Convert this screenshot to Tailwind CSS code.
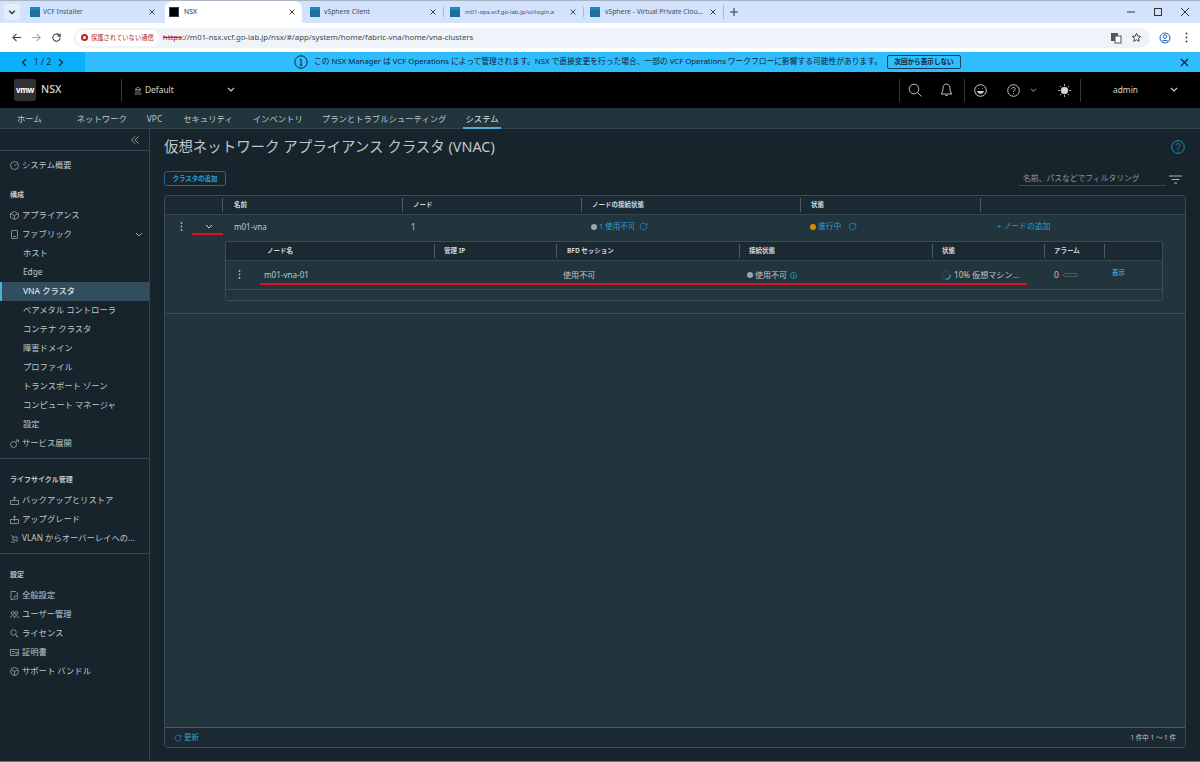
<!DOCTYPE html>
<html lang="ja">
<head>
<meta charset="UTF-8">
<title>NSX</title>
<script src="https://cdn.jsdelivr.net/npm/@tailwindcss/browser@4"></script>
</head>
<body class="w-[1200px] h-[762px] overflow-hidden flex flex-col bg-[#17242b] text-[8.3px] text-[#bfc8cc] font-['Noto_Sans','Noto_Sans_CJK_JP',sans-serif]">

<!-- browser tabs -->
<div class="h-[23px] shrink-0 flex items-center bg-[#d3e3fd] border-t border-[#a9b4c4] text-[6.8px] text-[#474c52]">
  <div class="w-[16px] h-[16px] ml-[4px] mr-[6px] rounded bg-[#e6eefc] flex items-center justify-center">
    <svg class="w-[8px] h-[8px]" viewBox="0 0 10 10" fill="none" stroke="#1f2937" stroke-width="1.6"><path d="M1.5 3.5 5 7l3.5-3.500"/></svg>
  </div>
  <div class="w-[139px] flex items-center pl-[4px] pr-[10px] gap-[3px]">
    <span class="w-[10px] h-[10px] shrink-0 bg-[#1d6f9e] border-t-[3px] border-[#0f8fc9]"></span>
    <span class="flex-1 min-w-0 truncate">VCF Installer</span>
    <svg class="w-[6px] h-[6px] shrink-0" viewBox="0 0 6 6" fill="none" stroke="#444"><path d="m.5.5 5 5M5.500.5l-5 5"/></svg>
  </div>
  <div class="w-[137px] h-[22px] flex items-center pl-[4px] pr-[7px] gap-[5px] bg-white rounded-t-lg text-[#1f1f1f]">
    <span class="w-[10px] h-[10px] shrink-0 bg-black border border-[#39424a]"></span>
    <span class="flex-1 min-w-0 truncate">NSX</span>
    <svg class="w-[6px] h-[6px] shrink-0" viewBox="0 0 6 6" fill="none" stroke="#444"><path d="m.5.5 5 5M5.500.5l-5 5"/></svg>
  </div>
  <div class="w-[141px] flex items-center pl-[8px] pr-[7px] gap-[4px]">
    <span class="w-[10px] h-[10px] shrink-0 bg-[#1d6f9e] border-t-[3px] border-[#0f8fc9]"></span>
    <span class="flex-1 min-w-0 truncate">vSphere Client</span>
    <svg class="w-[6px] h-[6px] shrink-0" viewBox="0 0 6 6" fill="none" stroke="#444"><path d="m.5.5 5 5M5.500.5l-5 5"/></svg>
  </div>
  <div class="w-[140px] flex items-center pl-[6px] pr-[7px] gap-[5px] border-l border-[#a9b9d3]">
    <span class="w-[10px] h-[10px] shrink-0 bg-[#1d6f9e] border-t-[3px] border-[#0f8fc9]"></span>
    <span class="flex-1 min-w-0 text-[6px] whitespace-nowrap">m01-ops.vcf.go-lab.jp/ui/login.a</span>
    <svg class="w-[6px] h-[6px] shrink-0" viewBox="0 0 6 6" fill="none" stroke="#444"><path d="m.5.5 5 5M5.500.5l-5 5"/></svg>
  </div>
  <div class="w-[140px] flex items-center pl-[6px] pr-[7px] gap-[5px] border-l border-[#a9b9d3]">
    <span class="w-[10px] h-[10px] shrink-0 bg-[#1d6f9e] border-t-[3px] border-[#0f8fc9]"></span>
    <span class="flex-1 min-w-0 truncate">vSphere - Virtual Private Clouds</span>
    <svg class="w-[6px] h-[6px] shrink-0" viewBox="0 0 6 6" fill="none" stroke="#444"><path d="m.5.5 5 5M5.500.5l-5 5"/></svg>
  </div>
  <div class="pl-[6px] border-l border-[#a9b9d3]">
    <svg class="w-[8px] h-[14px]" viewBox="0 0 8 14" fill="none" stroke="#333"><path d="M4 3v8M0 7h8"/></svg>
  </div>
  <div class="ml-auto flex items-center gap-[17px] pr-[10px]">
    <svg class="w-[10px] h-[10px]" viewBox="0 0 10 10" stroke="#333" fill="none"><path d="M1 5h8"/></svg>
    <svg class="w-[10px] h-[10px]" viewBox="0 0 10 10" stroke="#333" fill="none"><rect x="1.500" y="1.500" width="7" height="7"/></svg>
    <svg class="w-[10px] h-[10px]" viewBox="0 0 10 10" stroke="#333" fill="none"><path d="M1 1l8 8M9 1 1 9"/></svg>
  </div>
</div>

<!-- address bar -->
<div class="h-[29px] shrink-0 flex items-center bg-white text-[#474747]">
  <div class="w-[73px] flex items-center justify-around px-[6px]">
    <svg class="w-[11px] h-[11px]" viewBox="0 0 12 12" fill="none" stroke="#444" stroke-width="1.2"><path d="M11 6H2M6 2 2 6l4 4"/></svg>
    <svg class="w-[11px] h-[11px]" viewBox="0 0 12 12" fill="none" stroke="#a5a5a5" stroke-width="1.2"><path d="M1 6h9M6 2l4 4-4 4"/></svg>
    <svg class="w-[11px] h-[11px]" viewBox="0 0 12 12" fill="none" stroke="#444" stroke-width="1.2"><path d="M10 6a4 4 0 1 1-1.200-2.800L10 4.400M10 1.500v3H7"/></svg>
  </div>
  <div class="w-[1077px] h-[20px] flex items-center rounded-full bg-[#eff3fa]">
    <div class="h-[16px] ml-[3px] pl-[5px] pr-[5px] flex items-center gap-[3px] rounded-full bg-white text-[#b3261e] text-[6.3px]">
      <span class="w-[7px] h-[7px] rounded-full bg-[#c5221f] flex items-center justify-center"><span class="w-[3px] h-[3px] rounded-full bg-white"></span></span>
      保護されていない通信
    </div>
    <div class="ml-[4px] text-[7.85px]"><span class="text-[#c5221f] line-through">https</span>://m01-nsx.vcf.go-lab.jp/nsx/#/app/system/home/fabric-vna/home/vna-clusters</div>
    <div class="ml-auto mr-[8px] flex items-center gap-[9px]">
      <svg class="w-[12px] h-[12px]" viewBox="0 0 12 12"><rect x="1" y="1" width="7" height="8" fill="#555"/><rect x="5" y="4" width="6" height="7" fill="#fff" stroke="#555"/></svg>
      <svg class="w-[11px] h-[11px]" viewBox="0 0 12 12" fill="none" stroke="#333"><path d="m6 1.500 1.400 3 3.200.3-2.400 2.200.7 3.200L6 8.500l-2.900 1.700.7-3.200L1.400 4.800l3.200-.3z"/></svg>
    </div>
  </div>
  <div class="flex-1 flex items-center justify-between pl-[9px] pr-[12px]">
    <svg class="w-[12px] h-[12px]" viewBox="0 0 12 12" fill="none" stroke="#1a5fc8"><circle cx="6" cy="6" r="5"/><circle cx="6" cy="4.600" r="1.700"/><path d="M2.800 9.500C3.600 8 8.400 8 9.200 9.500"/></svg>
    <svg class="w-[3px] h-[11px]" viewBox="0 0 3 11" fill="#444"><circle cx="1.500" cy="1.500" r="1"/><circle cx="1.500" cy="5.500" r="1"/><circle cx="1.500" cy="9.500" r="1"/></svg>
  </div>
</div>

<!-- info banner -->
<div class="h-[20px] shrink-0 flex items-center bg-[#30bdfd] text-[#10232e]">
  <div class="w-[85px] h-full flex items-center justify-center gap-[6px] bg-[#0bb0fb] text-[8.5px]">
    <svg class="w-[7px] h-[9px]" viewBox="0 0 7 9" fill="none" stroke="#10232e" stroke-width="1.2"><path d="M5 1 1.500 4.500 5 8"/></svg>
    <span>1 / 2</span>
    <svg class="w-[7px] h-[9px]" viewBox="0 0 7 9" fill="none" stroke="#10232e" stroke-width="1.2"><path d="m2 1 3.500 3.500L2 8"/></svg>
  </div>
  <svg class="w-[14px] h-[14px] ml-[209px]" viewBox="0 0 14 14" fill="none" stroke="#10232e"><circle cx="7" cy="7" r="6.200"/><path d="M5.800 4.500 7 4v6M5.500 10.200h3"/></svg>
  <div class="ml-[6px] w-[573px] text-[7.75px] whitespace-nowrap">この NSX Manager は VCF Operations によって管理されます。NSX で直接変更を行った場合、一部の VCF Operations ワークフローに影響する可能性があります。</div>
  <button class="h-[14px] w-[74px] rounded-[2px] border border-[#10425e] text-[6.6px] font-bold">次回から表示しない</button>
  <svg class="w-[9px] h-[9px] ml-[219px]" viewBox="0 0 9 9" fill="none" stroke="#10232e" stroke-width="1.200"><path d="m1 1 7 7M8 1 1 8"/></svg>
</div>

<!-- app header -->
<div class="h-[36px] shrink-0 flex items-center bg-black text-[#d5dadc]">
  <div class="w-[22px] h-[22px] ml-[14px] flex items-center justify-center rounded-[2px] bg-[#313131] text-white text-[8px] font-bold tracking-tighter">vmw</div>
  <span class="ml-[5px] w-[80px] text-[10.5px] font-medium">NSX</span>
  <div class="w-px h-[23px] bg-[#33393c]"></div>
  <svg class="w-[8px] h-[9px] ml-[12px]" viewBox="0 0 8 9" fill="none" stroke="#9aa3a7" stroke-width=".8"><path d="M1 3.500 4 1l3 2.500zM2 4v3M4 4v3M6 4v3M.5 8h7"/></svg>
  <span class="ml-[3px] w-[82px] text-[8.4px]">Default</span>
  <svg class="w-[8px] h-[6px]" viewBox="0 0 8 6" fill="none" stroke="#c9d2d6" stroke-width="1.100"><path d="m1 1 3 3 3-3"/></svg>
  <div class="ml-auto flex items-center h-[23px]">
    <div class="w-px h-full bg-[#33393c]"></div>
    <svg class="w-[14px] h-[14px] ml-[8px]" viewBox="0 0 14 14" fill="none" stroke="#b9c1c5" stroke-width="1"><circle cx="6" cy="6" r="4.800"/><path d="m9.500 9.500 4 4"/></svg>
    <svg class="w-[13px] h-[14px] ml-[18px]" viewBox="0 0 13 14" fill="none" stroke="#b9c1c5" stroke-width="1"><path d="M6.500 1C9 1 10 3 10 5.500c0 3 1 4.500 2 5.500H1c1-1 2-2.500 2-5.500C3 3 4 1 6.500 1ZM5.500 12.500h2"/></svg>
    <div class="w-px h-full bg-[#33393c] ml-[11px]"></div>
    <svg class="w-[13px] h-[13px] ml-[9px]" viewBox="0 0 13 13" fill="none" stroke="#c9d2d6" stroke-width="1"><circle cx="6.500" cy="6.500" r="5.800"/><path d="M3.500 7.500c1 2.500 5 2.500 6 0z" fill="#c9d2d6"/><path d="M4.500 4.500v.5M8.500 4.500v.5"/></svg>
    <svg class="w-[13px] h-[13px] ml-[20px]" viewBox="0 0 13 13" fill="none" stroke="#b9c1c5" stroke-width="1"><circle cx="6.500" cy="6.500" r="5.800"/><path d="M4.800 5c0-2.300 3.500-2.300 3.500 0 0 1.300-1.800 1.300-1.800 3M6.500 9.300v.7"/></svg>
    <svg class="w-[7px] h-[5px] ml-[10px]" viewBox="0 0 8 6" fill="none" stroke="#b9c1c5" stroke-width="1.100"><path d="m1 1 3 3 3-3"/></svg>
    <svg class="w-[13px] h-[13px] ml-[21px]" viewBox="0 0 13 13" fill="#d5dadc" stroke="#d5dadc" stroke-width=".8"><circle cx="6.500" cy="6.500" r="3.300"/><path d="M6.500 0v2M6.500 11v2M0 6.500h2M11 6.500h2M2 2l1.300 1.300M9.700 9.700 11 11M11 2 9.700 3.300M3.300 9.700 2 11"/></svg>
    <div class="w-px h-full bg-[#33393c] ml-[9px]"></div>
    <span class="ml-[32px] w-[57px] text-[8.4px]">admin</span>
    <svg class="w-[8px] h-[6px] mr-[22px]" viewBox="0 0 8 6" fill="none" stroke="#c9d2d6" stroke-width="1.100"><path d="m1 1 3 3 3-3"/></svg>
  </div>
</div>

<!-- nav tabs -->
<div class="h-[21px] shrink-0 flex bg-[#22343c] border-b border-[#33454e] pl-[17px] text-[8.35px] text-[#bfc8cc]">
  <span class="h-[20px] leading-[21px] mr-[35px]">ホーム</span>
  <span class="h-[20px] leading-[21px] mr-[20px]">ネットワーク</span>
  <span class="h-[20px] leading-[21px] mr-[21px]">VPC</span>
  <span class="h-[20px] leading-[21px] mr-[20px]">セキュリティ</span>
  <span class="h-[20px] leading-[21px] mr-[19px]">インベントリ</span>
  <span class="h-[20px] leading-[21px] mr-[17px]">プランとトラブルシューティング</span>
  <span class="h-[21px] leading-[21px] px-[2px] border-b-2 border-[#49afd9] text-[#dfe4e6]">システム</span>
</div>

<div class="flex-1 flex min-h-0">
  <!-- sidebar -->
  <aside class="w-[150px] shrink-0 flex flex-col border-r border-[#33454e]">
    <div class="h-[22px] shrink-0 flex items-center justify-end pr-[10px] border-b border-[#33454e]">
      <svg class="w-[8px] h-[8px]" viewBox="0 0 8 8" fill="none" stroke="#8c989e"><path d="M4 .5.500 4 4 7.500M7.500.500 4 4l3.500 3.500"/></svg>
    </div>
    <div class="h-[19px] mt-[5px] flex items-center gap-[3px] pl-[10px]">
      <svg class="w-[9px] h-[9px]" viewBox="0 0 9 9" fill="none" stroke="#9aa5aa" stroke-width=".8"><circle cx="4.500" cy="4.500" r="4"/><path d="m4.500 5 2-2"/></svg>システム概要</div>
    <div class="h-[19px] mt-[11px] flex items-center pl-[10px] text-[7px] font-bold">構成</div>
    <div class="h-[19px] mt-[1px] flex items-center gap-[3px] pl-[10px]">
      <svg class="w-[9px] h-[9px]" viewBox="0 0 9 9" fill="none" stroke="#9aa5aa" stroke-width=".8"><path d="m4.500.5 4 2v4l-4 2-4-2v-4zM.5 2.500l4 2 4-2M4.500 4.500v4"/></svg>アプライアンス</div>
    <div class="h-[19px] flex items-center gap-[3px] pl-[10px] pr-[6px]">
      <svg class="w-[9px] h-[9px]" viewBox="0 0 9 9" fill="none" stroke="#9aa5aa" stroke-width=".8"><rect x="1.500" y=".5" width="6" height="8" rx=".5"/><path d="M3 6.500h3"/></svg>ファブリック
      <svg class="w-[8px] h-[6px] ml-auto" viewBox="0 0 8 6" fill="none" stroke="#9aa5aa" stroke-width="1"><path d="m1 1 3 3 3-3"/></svg></div>
    <div class="h-[19px] flex items-center pl-[23px]">ホスト</div>
    <div class="h-[19px] flex items-center pl-[23px]">Edge</div>
    <div class="h-[19px] flex items-center pl-[21px] bg-[#324d5e] border-l-2 border-[#49afd9] text-[#dfe4e6] font-medium">VNA クラスタ</div>
    <div class="h-[19px] flex items-center pl-[23px]">ベアメタル コントローラ</div>
    <div class="h-[19px] flex items-center pl-[23px]">コンテナ クラスタ</div>
    <div class="h-[19px] flex items-center pl-[23px]">障害ドメイン</div>
    <div class="h-[19px] flex items-center pl-[23px]">プロファイル</div>
    <div class="h-[19px] flex items-center pl-[23px]">トランスポート ゾーン</div>
    <div class="h-[19px] flex items-center pl-[23px]">コンピュート マネージャ</div>
    <div class="h-[19px] flex items-center pl-[23px]">設定</div>
    <div class="h-[19px] flex items-center gap-[3px] pl-[10px]">
      <svg class="w-[9px] h-[9px]" viewBox="0 0 9 9" fill="none" stroke="#9aa5aa" stroke-width=".8"><circle cx="3.500" cy="5.500" r="3"/><path d="M5.500 3.500 8 1M6 1h2.500v2.500"/></svg>サービス展開</div>
    <div class="h-px mt-[5px] bg-[#33454e]"></div>
    <div class="h-[19px] mt-[12px] flex items-center pl-[10px] text-[7px] font-bold">ライフサイクル管理</div>
    <div class="h-[19px] mt-[1px] flex items-center gap-[3px] pl-[10px]">
      <svg class="w-[9px] h-[9px]" viewBox="0 0 9 9" fill="none" stroke="#9aa5aa" stroke-width=".8"><path d="M.5 4.500h8v4h-8zM4.500 4V1M3 2.300 4.500 1 6 2.300"/></svg>バックアップとリストア</div>
    <div class="h-[19px] flex items-center gap-[3px] pl-[10px]">
      <svg class="w-[9px] h-[9px]" viewBox="0 0 9 9" fill="none" stroke="#9aa5aa" stroke-width=".8"><path d="M.5 4.500h8v4h-8zM4.500 6V1M3 2.300 4.500 1 6 2.300"/></svg>アップグレード</div>
    <div class="h-[19px] flex items-center gap-[3px] pl-[10px]">
      <svg class="w-[9px] h-[9px]" viewBox="0 0 9 9" fill="none" stroke="#9aa5aa" stroke-width=".8"><path d="M1 1l2 2h4v5M3 3v3h3M1 8h4"/></svg>VLAN からオーバーレイへの...</div>
    <div class="h-px mt-[5px] bg-[#33454e]"></div>
    <div class="h-[19px] mt-[12px] flex items-center pl-[10px] text-[7px] font-bold">設定</div>
    <div class="h-[19px] mt-[1px] flex items-center gap-[3px] pl-[10px]">
      <svg class="w-[9px] h-[9px]" viewBox="0 0 9 9" fill="none" stroke="#9aa5aa" stroke-width=".8"><path d="M4 8.500H1V.5h5l1.500 1.500v2.500"/><circle cx="6" cy="6.500" r="1.800"/></svg>全般設定</div>
    <div class="h-[19px] flex items-center gap-[3px] pl-[10px]">
      <svg class="w-[9px] h-[9px]" viewBox="0 0 9 9" fill="none" stroke="#9aa5aa" stroke-width=".8"><circle cx="2.800" cy="3" r="1.500"/><circle cx="6.200" cy="3" r="1.500"/><path d="M.5 8c0-3 4-3 4 0M4.500 8c0-3 4-3 4 0"/></svg>ユーザー管理</div>
    <div class="h-[19px] flex items-center gap-[3px] pl-[10px]">
      <svg class="w-[9px] h-[9px]" viewBox="0 0 9 9" fill="none" stroke="#9aa5aa" stroke-width=".8"><circle cx="3.500" cy="3.500" r="2.800"/><path d="m5.500 5.500 3 3M7 7l-1 1"/></svg>ライセンス</div>
    <div class="h-[19px] flex items-center gap-[3px] pl-[10px]">
      <svg class="w-[9px] h-[9px]" viewBox="0 0 9 9" fill="none" stroke="#9aa5aa" stroke-width=".8"><rect x=".5" y="1.500" width="8" height="6"/><path d="M2 3.500h3M2 5.500h2"/><circle cx="6.500" cy="5" r="1"/></svg>証明書</div>
    <div class="h-[19px] flex items-center gap-[3px] pl-[10px]">
      <svg class="w-[9px] h-[9px]" viewBox="0 0 9 9" fill="none" stroke="#9aa5aa" stroke-width=".8"><circle cx="4.500" cy="4.500" r="4"/><path d="m1.500 3 3 1.500L7.500 3M4.500 4.500v4"/></svg>サポート バンドル</div>
  </aside>

  <!-- main -->
  <main class="flex-1 flex flex-col pl-[14px] pr-[14px] pb-[13px] min-w-0">
    <div class="h-[36px] shrink-0 flex items-center justify-between">
      <h1 class="text-[14.45px] text-[#bfc8cc]">仮想ネットワーク アプライアンス クラスタ (VNAC)</h1>
      <svg class="w-[14px] h-[14px] mr-[1px]" viewBox="0 0 14 14" fill="none" stroke="#1e8fc4" stroke-width="1"><circle cx="7" cy="7" r="6.300"/><path d="M5 5.500C5 3 9 3 9 5.500 9 7 7 7 7 9M7 10v1"/></svg>
    </div>
    <div class="h-[27px] mt-[3px] shrink-0 flex items-center justify-between">
      <button class="h-[15px] w-[62px] mb-[6px] rounded-[3px] border border-[#1a6b94] text-[6.4px] font-bold text-[#2a9fd6]">クラスタの追加</button>
      <div class="flex items-center gap-[3px] mb-[5px] mr-[4px]">
        <div class="w-[147px] h-[14px] leading-[13px] pl-[4px] border-b border-[#3b4c54] text-[7.8px] text-[#8c989e]">名前、パスなどでフィルタリング</div>
        <svg class="w-[13px] h-[9px]" viewBox="0 0 13 9" fill="none" stroke="#aab4b9"><path d="M0 1h13M2.500 4.500h8M5 8h3"/></svg>
      </div>
    </div>

    <!-- clusters table -->
    <div class="flex-1 flex flex-col rounded-[3px] border border-[#3b4c54] bg-[#22343c] relative min-h-0">
      <div class="h-[19px] shrink-0 grid grid-cols-[57px_180px_179px_219px_180px_1fr] items-center bg-[#1b2a32] border-b border-[#33454e] text-[6.5px] font-bold text-[#d0d7da]">
        <div></div>
        <div class="h-[14px] leading-[14px] pl-[11px] border-l border-[#4b5b63]">名前</div>
        <div class="h-[14px] leading-[14px] pl-[10px] border-l border-[#4b5b63]">ノード</div>
        <div class="h-[14px] leading-[14px] pl-[10px] border-l border-[#4b5b63]">ノードの接続状態</div>
        <div class="h-[14px] leading-[14px] pl-[10px] border-l border-[#4b5b63]">状態</div>
        <div class="h-[14px] border-l border-[#4b5b63]"></div>
      </div>
      <div class="h-[26px] pb-[3px] shrink-0 grid grid-cols-[57px_180px_179px_219px_180px_1fr] items-center">
        <div class="flex items-center pl-[15px]">
          <svg class="w-[3px] h-[9px]" viewBox="0 0 3 9" fill="#aab4b9"><circle cx="1.500" cy="1" r=".9"/><circle cx="1.500" cy="4.500" r=".9"/><circle cx="1.500" cy="8" r=".9"/></svg>
          <svg class="w-[8px] h-[6px] ml-[22px]" viewBox="0 0 8 6" fill="none" stroke="#c9d2d6" stroke-width="1"><path d="m1 1 3 3 3-3"/></svg>
        </div>
        <div class="pl-[12px] text-[8px]">m01-vna</div>
        <div class="pl-[9px] text-[8px]">1</div>
        <div class="pl-[10px] flex items-center text-[7.5px] text-[#2a9fd6]">
          <span class="w-[6px] h-[6px] rounded-full bg-[#9aa5aa] mr-[2px]"></span>1 使用不可
          <svg class="w-[9px] h-[9px] ml-[4px]" viewBox="0 0 9 9" fill="none" stroke="#1e7ba8"><path d="M7.800 4.500a3.300 3.300 0 1 1-1-2.300L8 3M8 1v2H6"/></svg>
        </div>
        <div class="pl-[10px] flex items-center text-[7.8px] text-[#2a9fd6]">
          <span class="w-[6px] h-[6px] rounded-full bg-[#d28f00] mr-[2px]"></span>進行中
          <svg class="w-[9px] h-[9px] ml-[7px]" viewBox="0 0 9 9" fill="none" stroke="#1e7ba8"><path d="M7.800 4.500a3.300 3.300 0 1 1-1-2.300L8 3M8 1v2H6"/></svg>
        </div>
        <div class="pl-[17px] text-[7.8px] text-[#2a9fd6]">+ ノードの追加</div>
      </div>

      <!-- nodes table -->
      <div class="h-[60px] shrink-0 ml-[60px] mr-[22px] flex flex-col rounded-[2px] border border-[#3b4c54]">
        <div class="h-[19px] shrink-0 grid grid-cols-[208px_122px_183px_193px_112px_60px_1fr] items-center bg-[#1b2a32] border-b border-[#33454e] text-[6.5px] font-bold text-[#d0d7da]">
          <div class="pl-[41px]">ノード名</div>
          <div class="h-[14px] leading-[14px] pl-[9px] border-l border-[#4b5b63]">管理 IP</div>
          <div class="h-[14px] leading-[14px] pl-[10px] border-l border-[#4b5b63]">BFD セッション</div>
          <div class="h-[14px] leading-[14px] pl-[9px] border-l border-[#4b5b63]">接続状態</div>
          <div class="h-[14px] leading-[14px] pl-[9px] border-l border-[#4b5b63]">状態</div>
          <div class="h-[14px] leading-[14px] pl-[9px] border-l border-[#4b5b63]">アラーム</div>
          <div class="h-[14px] border-l border-[#4b5b63]"></div>
        </div>
        <div class="h-[29px] shrink-0 grid grid-cols-[208px_122px_183px_193px_112px_60px_1fr] items-center border-b border-[#3b4c54]">
          <div class="flex items-center pl-[12px]">
            <svg class="w-[3px] h-[9px]" viewBox="0 0 3 9" fill="#aab4b9"><circle cx="1.500" cy="1" r=".9"/><circle cx="1.500" cy="4.500" r=".9"/><circle cx="1.500" cy="8" r=".9"/></svg>
            <span class="ml-[23px] text-[8.1px]">m01-vna-01</span>
          </div>
          <div></div>
          <div class="pl-[7px] text-[8.1px]">使用不可</div>
          <div class="pl-[8px] flex items-center text-[8px]">
            <span class="w-[6px] h-[6px] rounded-full bg-[#9aa5aa] mr-[2px]"></span>使用不可
            <svg class="w-[7px] h-[7px] ml-[3px]" viewBox="0 0 7 7" fill="none" stroke="#2a9fd6" stroke-width=".8"><circle cx="3.500" cy="3.500" r="3"/><path d="M3.500 3v2M3.500 1.700v.5"/></svg>
          </div>
          <div class="pl-[9px] flex items-center text-[8.1px]">
            <svg class="w-[10px] h-[10px] mr-[3px]" viewBox="0 0 10 10" fill="none" stroke-width="1.200"><circle cx="5" cy="5" r="4.300" stroke="#33454e"/><path d="M9.300 5A4.300 4.300 0 0 1 5 9.300" stroke="#2a9fd6"/></svg>
            <span class="whitespace-nowrap">10% 仮想マシン...</span>
          </div>
          <div class="pl-[10px] flex items-center text-[8.5px]">0
            <span class="w-[15px] h-[4px] ml-[4px] rounded-full border border-[#4b5b63]"></span></div>
          <div class="pl-[8px] mb-[4px] text-[6.5px] font-bold text-[#2a9fd6]">表示</div>
        </div>
      </div>
      <div class="h-[13px] shrink-0 border-b border-[#3b4c54]"></div>

      <div class="flex-1"></div>
      <div class="h-[20px] shrink-0 flex items-center justify-between px-[9px] bg-[#1b2a32] border-t border-[#4b5b63]">
        <span class="flex items-center gap-[2px] text-[7.5px] text-[#2a9fd6]">
          <svg class="w-[8px] h-[8px]" viewBox="0 0 9 9" fill="none" stroke="#1e7ba8"><path d="M7.800 4.500a3.300 3.300 0 1 1-1-2.300L8 3M8 1v2H6"/></svg>更新</span>
        <span class="text-[6.5px] text-[#bfc8cc]">1 件中 1 ～ 1 件</span>
      </div>

      <!-- red annotation lines -->
      <div class="absolute left-[27px] top-[37px] w-[31px] h-[2px] bg-[#e0101e]"></div>
      <div class="absolute left-[95px] top-[87px] w-[767px] h-[2px] bg-[#e0101e]"></div>
    </div>
  </main>
</div>
<div class="h-px shrink-0 bg-[#6a7478]"></div>
</body>
</html>
